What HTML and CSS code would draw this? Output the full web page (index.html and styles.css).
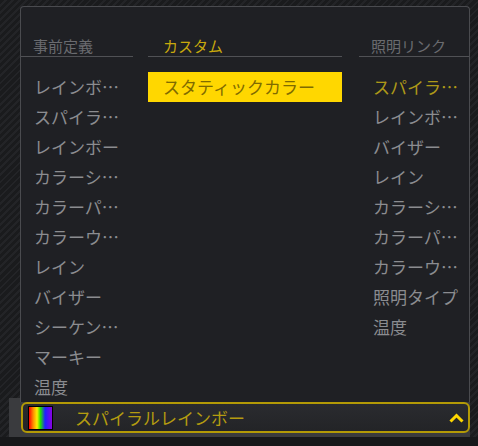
FILE: index.html
```html
<!DOCTYPE html>
<html lang="ja">
<head>
<meta charset="utf-8">
<title>照明</title>
<link rel="stylesheet" href="styles.css">
</head>
<body>
<div class="stage">
  <div class="popover">
    <div class="columns">
      <div class="col col-left">
        <div class="head">事前定義</div>
        <ul class="list">
          <li class="item">レインボーウェーブ</li>
          <li class="item">スパイラルレインボー</li>
          <li class="item">レインボー</li>
          <li class="item">カラーシフト</li>
          <li class="item">カラーパルス</li>
          <li class="item">カラーウェーブ</li>
          <li class="item">レイン</li>
          <li class="item">バイザー</li>
          <li class="item">シーケンシャル</li>
          <li class="item">マーキー</li>
          <li class="item">温度</li>
        </ul>
      </div>
      <div class="col col-mid">
        <div class="head head-active">カスタム</div>
        <ul class="list">
          <li class="item item-selected">スタティックカラー</li>
        </ul>
      </div>
      <div class="col col-right">
        <div class="head">照明リンク</div>
        <ul class="list">
          <li class="item item-current">スパイラルレインボー</li>
          <li class="item">レインボーウェーブ</li>
          <li class="item">バイザー</li>
          <li class="item">レイン</li>
          <li class="item">カラーシフト</li>
          <li class="item">カラーパルス</li>
          <li class="item">カラーウェーブ</li>
          <li class="item">照明タイプ</li>
          <li class="item">温度</li>
        </ul>
      </div>
    </div>
  </div>
  <div class="bar">
    <div class="select">
      <span class="swatch"></span>
      <span class="select-label">スパイラルレインボー</span>
      <svg class="chevron" width="15" height="10" viewBox="0 0 15 10"><polyline points="1.5,8.5 7.5,2.5 13.5,8.5" fill="none" stroke="#ffd700" stroke-width="3"/></svg>
    </div>
  </div>
  <div class="footer"></div>
</div>
</body>
</html>
```
FILE: styles.css
```css
html, body {
  margin: 0;
  padding: 0;
}
body {
  width: 478px;
  height: 446px;
  overflow: hidden;
  font-family: "Noto Sans CJK JP", "Noto Sans", sans-serif;
  background: repeating-linear-gradient(135deg, #1a1b1d 0px, #1a1b1d 3px, #232427 3px, #232427 5px);
}
.stage {
  display: flex;
  flex-direction: column;
  height: 446px;
}
.popover {
  position: relative;
  z-index: 1;
  box-sizing: border-box;
  margin: 6px 0 0 20px;
  width: 450px;
  height: 396px;
  border: 1px solid #4a4b4f;
  border-bottom: none;
  border-radius: 4px 4px 0 0;
  background: #1f2024;
  padding-top: 29px;
}
.columns {
  display: flex;
}
.col {
  min-width: 0;
  flex: none;
}
.col-left { width: 112px; }
.col-mid { width: 194px; margin-left: 15px; }
.col-right { width: 110px; margin-left: 17px; }
.head {
  font-size: 15px;
  line-height: 20px;
  height: 20px;
  color: #6a6b6f;
  border-bottom: 1px solid #505155;
  white-space: nowrap;
}
.head-active {
  color: #c9a90c;
}
.col-left .head { padding-left: 12px; }
.col-mid .head { padding-left: 15px; }
.col-right .head { padding-left: 12px; }
.list {
  list-style: none;
  margin: 15px 0 0 0;
  padding: 0;
}
.item {
  height: 30px;
  line-height: 30px;
  font-size: 17px;
  color: #8b8c90;
  white-space: nowrap;
  overflow: hidden;
  text-overflow: ellipsis;
}
.col-left .item { padding-left: 13px; }
.col-mid .item { padding-left: 15px; }
.col-right .item { padding-left: 14px; }
.item-selected {
  background: #ffd700;
  color: #7f6b00;
}
.item-current {
  color: #ad9818;
}
.bar {
  margin: -4px 0 0 9px;
  width: 461px;
  height: 39px;
  box-sizing: border-box;
  padding: 4px 0 4px 12px;
  background: #3a3b3e;
}
.select {
  box-sizing: border-box;
  height: 31px;
  display: flex;
  align-items: center;
  border: 2px solid #b39a06;
  border-radius: 6px;
  background: linear-gradient(#2a2b2f, #232427);
  padding: 0 4px 0 5px;
}
.swatch {
  flex: none;
  width: 23px;
  height: 22px;
  border: 1px solid #000;
  background: linear-gradient(to right, #ff0000 0%, #ff8a00 18%, #ffee00 35%, #22e000 50%, #1e20ff 70%, #8a00e0 100%);
}
.select-label {
  flex: 1;
  margin-left: 22px;
  font-size: 17px;
  color: #b49c10;
  white-space: nowrap;
}
.chevron {
  flex: none;
  display: block;
}
.footer {
  flex: 1;
  background: #17181a;
}
```
